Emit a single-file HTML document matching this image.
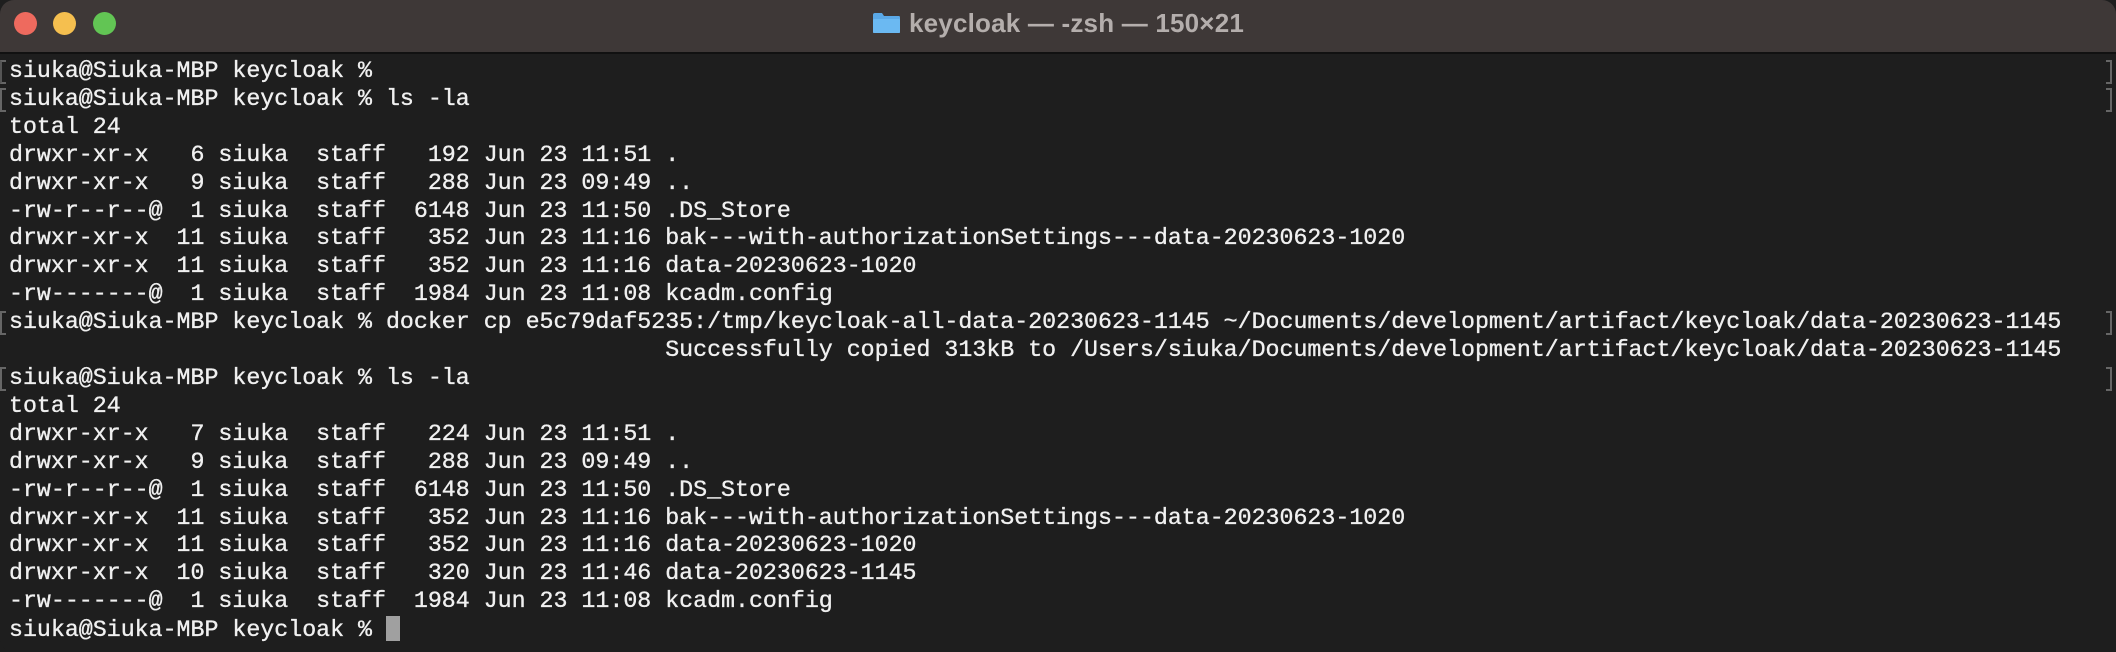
<!DOCTYPE html>
<html><head><meta charset="utf-8"><style>
html,body{margin:0;padding:0;width:2116px;height:652px;overflow:hidden;background:#1e1e1e}
.win{position:absolute;left:0;top:0;width:2116px;height:652px;background:#1e1e1e;border-radius:14px;overflow:hidden}
.tb{position:absolute;left:0;top:0;width:2116px;height:52px;background:#3e3837;border-bottom:2px solid #111}
.dot{position:absolute;top:12px;width:23px;height:23px;border-radius:50%}
.title{position:absolute;top:8px;left:0;width:2116px;text-align:center;font:bold 26px "Liberation Sans",sans-serif;color:#b4aeac;letter-spacing:0.2px}
.folder{display:inline-block;width:29px;height:22px;vertical-align:-2px;margin-right:8px;position:relative}
pre{position:absolute;left:9px;top:58px;margin:0;font-family:"Liberation Mono",monospace;font-size:23.27px;line-height:27.9px;color:#f0f0f0;white-space:pre;-webkit-text-stroke:0.35px #f0f0f0}
.cur{display:inline-block;width:14px;height:25px;background:#a0a0a0;vertical-align:-5px}
.br{position:absolute;width:3px;height:20px;border:2px solid #666;}
</style></head><body><div class="win">
<div class="tb">
<div class="dot" style="left:14px;background:#ee6a5e"></div>
<div class="dot" style="left:53px;background:#f5bf4f"></div>
<div class="dot" style="left:93px;background:#62c554"></div>
<div class="title"><span class="folder"><svg width="29" height="22" viewBox="0 0 29 22"><path d="M1 3 Q1 1 3 1 H10 L12 4 H27 Q28 4 28 6 V20 Q28 21 27 21 H2 Q1 21 1 20 Z" fill="#5aa8e6"/><rect x="1" y="7" width="27" height="14" rx="1" fill="#6bb9f2"/></svg></span>keycloak — -zsh — 150×21</div>
</div>
<div class="br" style="left:0;top:60px;border-right:none;border-left:2px solid #555;width:4px"></div>
<div class="br" style="left:0;top:88px;border-right:none;width:4px"></div>
<div class="br" style="left:0;top:311px;border-right:none;width:4px"></div>
<div class="br" style="left:0;top:367px;border-right:none;width:4px"></div>
<div class="br" style="left:2106px;top:60px;border-left:none;width:4px"></div>
<div class="br" style="left:2106px;top:88px;border-left:none;width:4px"></div>
<div class="br" style="left:2106px;top:311px;border-left:none;width:4px"></div>
<div class="br" style="left:2106px;top:367px;border-left:none;width:4px"></div>
<pre>siuka@Siuka-MBP keycloak %
siuka@Siuka-MBP keycloak % ls -la
total 24
drwxr-xr-x   6 siuka  staff   192 Jun 23 11:51 .
drwxr-xr-x   9 siuka  staff   288 Jun 23 09:49 ..
-rw-r--r--@  1 siuka  staff  6148 Jun 23 11:50 .DS_Store
drwxr-xr-x  11 siuka  staff   352 Jun 23 11:16 bak---with-authorizationSettings---data-20230623-1020
drwxr-xr-x  11 siuka  staff   352 Jun 23 11:16 data-20230623-1020
-rw-------@  1 siuka  staff  1984 Jun 23 11:08 kcadm.config
siuka@Siuka-MBP keycloak % docker cp e5c79daf5235:/tmp/keycloak-all-data-20230623-1145 ~/Documents/development/artifact/keycloak/data-20230623-1145
                                               Successfully copied 313kB to /Users/siuka/Documents/development/artifact/keycloak/data-20230623-1145
siuka@Siuka-MBP keycloak % ls -la
total 24
drwxr-xr-x   7 siuka  staff   224 Jun 23 11:51 .
drwxr-xr-x   9 siuka  staff   288 Jun 23 09:49 ..
-rw-r--r--@  1 siuka  staff  6148 Jun 23 11:50 .DS_Store
drwxr-xr-x  11 siuka  staff   352 Jun 23 11:16 bak---with-authorizationSettings---data-20230623-1020
drwxr-xr-x  11 siuka  staff   352 Jun 23 11:16 data-20230623-1020
drwxr-xr-x  10 siuka  staff   320 Jun 23 11:46 data-20230623-1145
-rw-------@  1 siuka  staff  1984 Jun 23 11:08 kcadm.config
siuka@Siuka-MBP keycloak % <span class="cur"></span></pre>
</div></body></html>
